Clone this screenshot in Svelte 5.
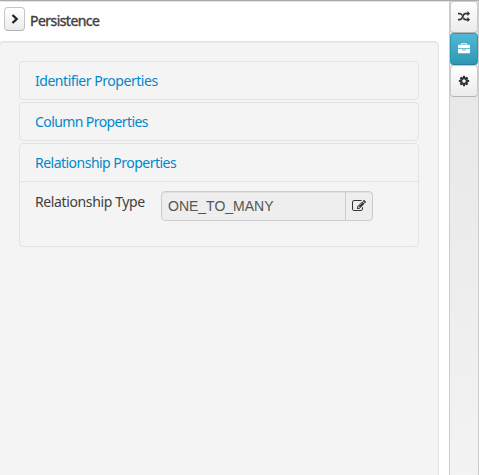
<script>
  const closedGroups = [
    { title: 'Identifier Properties', spacing: -0.46 },
    { title: 'Column Properties', spacing: -0.59 }
  ];
  const tools = [
    {
      name: 'random',
      path: 'M666 481q-60 92-137 273-22-45-37-72.5t-40.5-63.5-51-56.5-63-35-81.5-14.5h-224q-14 0-23-9t-9-23v-192q0-14 9-23t23-9h224q250 0 410 225zm1126 799q0 14-9 23l-320 320q-9 9-23 9-13 0-22.5-9.5t-9.5-22.5v-192q-32 0-85 .5t-81 1-73-1-71-5-64-10.5-63-18.5-58-28.5-59-40-55-53.5-56-69.5q59-93 136-273 22 45 37 72.5t40.5 63.5 51 56.5 63 35 81.5 14.5h256v-192q0-14 9-23t23-9q12 0 24 10l319 319q9 9 9 23zm0-896q0 14-9 23l-320 320q-9 9-23 9-13 0-22.5-9.5t-9.5-22.5v-192h-256q-48 0-87 15t-69 45-51 61.5-45 77.5q-32 62-78 171-29 66-49.5 111t-54 105-64 100-74 83-90 68.5-106.5 42-128 16.5h-224q-14 0-23-9t-9-23v-192q0-14 9-23t23-9h224q48 0 87-15t69-45 51-61.5 45-77.5q32-62 78-171 29-66 49.5-111t54-105 64-100 74-83 90-68.5 106.5-42 128-16.5h256v-192q0-14 9-23t23-9q12 0 24 10l319 319q9 9 9 23z'
    },
    {
      name: 'briefcase',
      active: true,
      path: 'M640 256h512v-128h-512v128zm1152 640v480q0 66-47 113t-113 47h-1472q-66 0-113-47t-47-113v-480h672v160q0 26 19 45t45 19h320q26 0 45-19t19-45v-160h672zm-768 0v128h-256v-128h256zm768-480v384h-1792v-384q0-66 47-113t113-47h352v-160q0-40 28-68t68-28h576q40 0 68 28t28 68v160h352q66 0 113 47t47 113z'
    },
    {
      name: 'settings',
      path: 'M1152 896q0-106-75-181t-181-75-181 75-75 181 75 181 181 75 181-75 75-181zm512-109v222q0 12-8 23t-20 13l-185 28q-19 54-39 91 35 50 107 138 10 12 10 25t-9 23q-27 37-99 108t-94 71q-12 0-26-9l-138-108q-44 23-91 38-16 136-29 186-7 28-36 28h-222q-14 0-24.5-8.5t-11.5-21.5l-28-184q-49-16-90-37l-141 107q-10 9-25 9-14 0-25-11-126-114-165-168-7-10-7-23 0-12 8-23 15-21 51-66.5t54-70.5q-27-50-41-99l-183-27q-13-2-21-12.5t-8-23.5v-222q0-12 8-23t19-13l186-28q14-46 39-92-40-57-107-138-10-12-10-24 0-10 9-23 26-36 98.5-107.5t94.5-71.5q13 0 26 10l138 107q44-23 91-38 16-136 29-186 7-28 36-28h222q14 0 24.5 8.5t11.5 21.5l28 184q49 16 90 37l142-107q9-9 24-9 13 0 25 10 129 119 165 170 7 8 7 22 0 12-8 23-15 21-51 66.5t-54 70.5q26 50 41 98l183 28q13 2 21 12.5t8 23.5z'
    }
  ];
</script>

<div class="app">
  <main>
    <header>
      <button class="collapse" aria-label="Collapse">
        <svg width="8" height="10" viewBox="0 0 8 10"><path d="M1.5 1L5.7 5L1.5 9" fill="none" stroke="#222" stroke-width="2.3" /></svg>
      </button>
      <h1>Persistence</h1>
    </header>
    <section class="well">
      {#each closedGroups as group}
        <div class="group"><a class="heading" href="#group" style:letter-spacing="{group.spacing}px">{group.title}</a></div>
      {/each}
      <div class="group">
        <a class="heading" href="#group">Relationship Properties</a>
        <div class="body">
          <span class="label">Relationship Type</span>
          <div class="field">
            <span class="value">ONE_TO_MANY</span>
            <button class="edit" aria-label="Edit">
              <svg width="14" height="14" viewBox="0 0 1792 1792"><path fill="#333" d="M888 1184l116-116-152-152-116 116v56h96v96h56zm440-720q-16-16-33 1l-350 350q-17 17-1 33t33-1l350-350q17-17 1-33zm80 594v190q0 119-84.5 203.5t-203.5 84.5h-832q-119 0-203.5-84.5t-84.5-203.5v-832q0-119 84.5-203.5t203.5-84.5h832q63 0 117 25 15 7 18 23 3 17-9 29l-49 49q-14 14-32 8-23-6-45-6h-832q-66 0-113 47t-47 113v832q0 66 47 113t113 47h832q66 0 113-47t47-113v-126q0-13 9-22l64-64q15-15 35-7t20 29zm-96-738l288 288-672 672h-288v-288zm444 132l-92 92-288-288 92-92q28-28 68-28t68 28l152 152q28 28 28 68t-28 68z" /></svg>
            </button>
          </div>
        </div>
      </div>
    </section>
  </main>
  <nav>
    {#each tools as tool}
      <button class="tool" class:active={tool.active} aria-label={tool.name}>
        <svg width="12" height="12" viewBox="0 0 1792 1792"><path fill="currentColor" d={tool.path} /></svg>
      </button>
    {/each}
  </nav>
</div>

<style>
  :global(body) { background: #fff; }
  * { box-sizing: border-box; }
  button { padding: 0; display: flex; align-items: center; justify-content: center; }
  svg { display: block; }
  .app {
    display: flex;
    width: 479px;
    height: 475px;
    overflow: hidden;
    border-top: 1px solid #aaa;
    box-shadow: inset 0 1px #e4e4e4;
    font: 14px/20px "Noto Sans", sans-serif;
    letter-spacing: -0.38px;
    color: #404040;
  }
  main { width: 449px; display: flex; flex-direction: column; }
  header { flex: none; height: 40px; padding: 6px 0 0 4px; display: flex; }
  .collapse {
    width: 21px;
    height: 24px;
    border: 1px solid #c5c5c5;
    border-bottom-color: #b3b3b3;
    border-radius: 4px;
    background: linear-gradient(#fff, #ececec);
  }
  h1 {
    margin: 4px 0 0 5px;
    font-size: 14px;
    line-height: 20px;
    font-weight: 400;
    letter-spacing: -0.55px;
    -webkit-text-stroke: 0.4px #404040;
  }
  .well {
    width: 440px;
    height: 460px;
    flex: none;
    margin-left: -1px;
    padding: 19px 19px 0;
    border: 1px solid #e3e3e3;
    border-radius: 4px;
    background: #f4f4f4;
    box-shadow: inset 0 1px 1px rgba(0, 0, 0, .05);
  }
  .group { width: 400px; margin-bottom: 2px; border: 1px solid #e3e3e3; border-radius: 4px; }
  .heading {
    display: block;
    height: 37px;
    padding: 9px 15px 8px;
    color: #08c;
    letter-spacing: -0.52px;
    text-decoration: none;
  }
  .body { height: 65px; border-top: 1px solid #e3e3e3; padding: 9px 15px 0; display: flex; }
  .label { width: 126px; padding-top: 1px; }
  .field {
    display: flex;
    width: 212px;
    height: 30px;
    border: 1px solid #ccc;
    border-radius: 4px;
    background: #eee;
    box-shadow: inset 0 1px 1px rgba(0, 0, 0, .06);
  }
  .value {
    flex: 1;
    padding: 4px 6px;
    font: 14px/20px "Liberation Sans", sans-serif;
    letter-spacing: 0;
    color: #555;
  }
  .edit { width: 27px; border: 0; border-left: 1px solid #ccc; background: transparent; }
  nav {
    width: 30px;
    border: solid #ccc;
    border-width: 0 1px;
    background: linear-gradient(#e5e5e5, #f3f3f3);
  }
  .tool {
    width: 28px;
    height: 32px;
    border: 1px solid #ccc;
    border-bottom-color: #b3b3b3;
    border-radius: 4px;
    background: linear-gradient(#fff, #ececec);
    color: #333;
  }
  .tool.active {
    border-color: #2f96b4 #2f96b4 #267f99;
    background: linear-gradient(#52b8d6, #2f96b4);
    color: #fff;
  }
</style>
